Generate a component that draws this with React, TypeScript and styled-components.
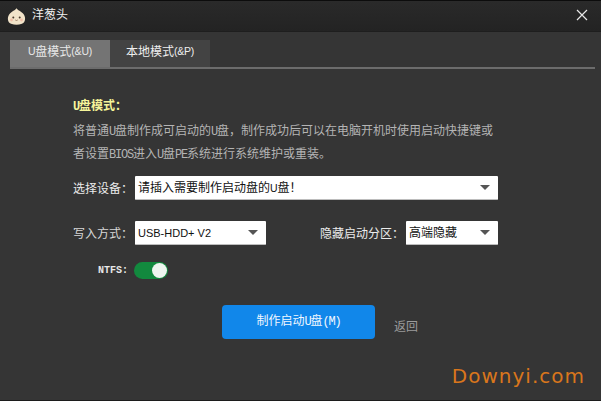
import React from "react";
import styled, { createGlobalStyle } from "styled-components";

const Global = createGlobalStyle`
  html, body { margin: 0; padding: 0; background: #353535; }
  * { box-sizing: border-box; }
`;
const cjk = `"Liberation Sans", "Noto Sans CJK SC", sans-serif`;

const Window = styled.div`
  width: 601px; height: 401px; display: flex; flex-direction: column;
  background: #353535; border-top: 1px solid #0c0c0c; border-bottom: 1px solid #1c1c1c;
  font-family: ${cjk}; font-size: 12px; color: #e6e6e6; overflow: hidden; position: relative;
`;
const TitleBar = styled.header`
  height: 31px; flex: none; display: flex; align-items: center; padding: 0 13px 0 7px; gap: 6px;
  background: linear-gradient(#2a2a2a, #232323); border-bottom: 1px solid #1e1e1e;
`;
const Title = styled.span`font-size: 12px; color: #f0f0f0; flex: 1; line-height: 16px; margin-bottom: 3px;`;
const Close = styled.svg`width: 12px; height: 12px; margin-bottom: 2px;`;
const Tabs = styled.nav`
  display: flex; margin: 8px 6px 0 10px; height: 29px; flex: none; border-bottom: 2px solid #6c6c6c;
`;
const Tab = styled.div<{ $active?: boolean }>`
  width: 100px; height: 27px; display: flex; align-items: center; justify-content: center;
  font-size: 12px; padding-bottom: 4px; white-space: pre; line-height: 16px;
  background: ${p => (p.$active ? "#747474" : "#434343")};
  color: ${p => (p.$active ? "#e8e8e8" : "#efefef")};
`;
const Latin = styled.span`
  font-size: 12px; line-height: 1; letter-spacing: -1.2px; font-family: "Liberation Mono", monospace;
`;
const Sans = styled.span`font-size: 10.5px; line-height: 1; letter-spacing: -0.2px;`;
const Body = styled.main`
  flex: 1; display: flex; flex-direction: column; padding: 28px 0 0 73px;
`;
const Heading = styled.h2`
  margin: 0; height: 16px; font-size: 12px; line-height: 16px; font-weight: 700; color: #f5f59a;
  font-family: "Noto Sans CJK SC", sans-serif;
`;
const Desc = styled.p`
  margin: 5px 0 0; width: 430px; height: 46px; font-size: 12px; line-height: 23px; color: #b4b4b4;
  font-family: "Noto Sans CJK SC", sans-serif; white-space: nowrap;
`;
const Row = styled.div<{ $top: number }>`
  display: flex; align-items: center; margin-top: ${p => p.$top}px;
`;
const Label = styled.label<{ $w: number; $soft?: boolean }>`
  width: ${p => p.$w}px; flex: none; font-size: 12px; line-height: 16px; white-space: nowrap;
  font-family: "Noto Sans CJK SC", sans-serif;
  color: ${p => (p.$soft ? "#d8d8d8" : "#ececec")};
`;
const Gap = styled.span<{ $w: number }>`width: ${p => p.$w}px; flex: none;`;
const Select = styled.div<{ $w: number; $small?: boolean }>`
  width: ${p => p.$w}px; height: 24px; flex: none;
  display: flex; align-items: center; justify-content: space-between; padding: 0 8px 0 3px;
  background: #fff; color: #111; border-bottom: 1px solid #bdbdbd;
  font-size: ${p => (p.$small ? 11 : 12)}px; white-space: nowrap; border-radius: 1px; line-height: 16px;
`;
const Arrow = styled.i`
  width: 0; height: 0; border-left: 5px solid transparent; border-right: 5px solid transparent;
  border-top: 5px solid #555; flex: none;
`;
const Toggle = styled.div`
  width: 34px; height: 17px; margin-left: 6px; border-radius: 9px; background: #12893e;
  display: flex; align-items: center; justify-content: flex-end; padding-right: 1px;
`;
const Knob = styled.span`width: 15px; height: 15px; border-radius: 50%; background: #eef5f0;`;
const NtfsLabel = styled.span`
  width: 55px; flex: none; text-align: right; font-size: 10px; color: #e8e8e8;
  font-family: "Liberation Mono", monospace; font-weight: 700;
`;
const Actions = styled.div`
  display: flex; align-items: flex-end; gap: 19px; margin: 26px 0 0 149px;
`;
const Primary = styled.button`
  width: 153px; height: 34px; border: 0; border-radius: 4px; background: #1187ea; color: #f2f8ff;
  font: 12px/16px ${cjk}; padding: 0 0 3px;
`;
const Back = styled.span`font-size: 12px; color: #9c9c9c; line-height: 16px; margin-bottom: 4px;`;
const Watermark = styled.div`
  position: absolute; right: 16px; bottom: 12px; font-family: "DejaVu Sans", sans-serif;
  font-size: 20px; line-height: 24px; letter-spacing: 1px; color: #d9761c;
`;

export default function App() {
  return (
    <Window>
      <Global />
      <TitleBar>
        <svg width="19" height="19" viewBox="0 0 19 19">
          <path d="M9.5 1 C10 3 13.5 4 15.8 6.2 C19 9.5 19 15 15 16.8 C11 18 8 18 4 16.8 C0 15 0 9.5 3.2 6.2 C5.5 4 9 3 9.5 1Z" fill="#f1e3c9" />
          <circle cx="6.3" cy="10.5" r="1" fill="#4a3a2c" />
          <circle cx="12.7" cy="10.5" r="1" fill="#4a3a2c" />
          <circle cx="4.5" cy="13" r="1.4" fill="#f0bfa8" />
          <circle cx="14.5" cy="13" r="1.4" fill="#f0bfa8" />
          <path d="M8.3 13 Q9.5 14 10.7 13" stroke="#8a6a50" fill="none" strokeWidth="0.8" />
        </svg>
        <Title>洋葱头</Title>
        <Close viewBox="0 0 12 12">
          <path d="M1 1 L11 11 M11 1 L1 11" stroke="#e8e8e8" strokeWidth="1.2" fill="none" />
        </Close>
      </TitleBar>
      <Tabs>
        <Tab $active><Sans>U</Sans>盘模式<Sans>(&amp;U)</Sans></Tab>
        <Tab>本地模式<Sans>(&amp;P)</Sans></Tab>
      </Tabs>
      <Body>
        <Heading><Latin>U</Latin>盘模式&#xFF1A;</Heading>
        <Desc>
          将普通<Latin>U</Latin>盘制作成可启动的<Latin>U</Latin>盘&#xFF0C;制作成功后可以在电脑开机时使用启动快捷键或
          <br />
          者设置<Latin>BIOS</Latin>进入<Latin>U</Latin>盘<Latin>PE</Latin>系统进行系统维护或重装。
        </Desc>
        <Row $top={12}>
          <Label $w={62}>选择设备&#xFF1A;</Label>
          <Select $w={363}><span>请插入需要制作启动盘的<Sans>U</Sans>盘&#xFF01;</span><Arrow /></Select>
        </Row>
        <Row $top={21}>
          <Label $w={62} $soft>写入方式&#xFF1A;</Label>
          <Select $w={131} $small>USB-HDD+ V2<Arrow /></Select>
          <Gap $w={54} />
          <Label $w={86}>隐藏启动分区&#xFF1A;</Label>
          <Select $w={92}>高端隐藏<Arrow /></Select>
        </Row>
        <Row $top={17}>
          <NtfsLabel>NTFS:</NtfsLabel>
          <Toggle><Knob /></Toggle>
        </Row>
        <Actions>
          <Primary>制作启动<Latin>U</Latin>盘<Latin>(M)</Latin></Primary>
          <Back>返回</Back>
        </Actions>
      </Body>
      <Watermark>Downyi.com</Watermark>
    </Window>
  );
}
